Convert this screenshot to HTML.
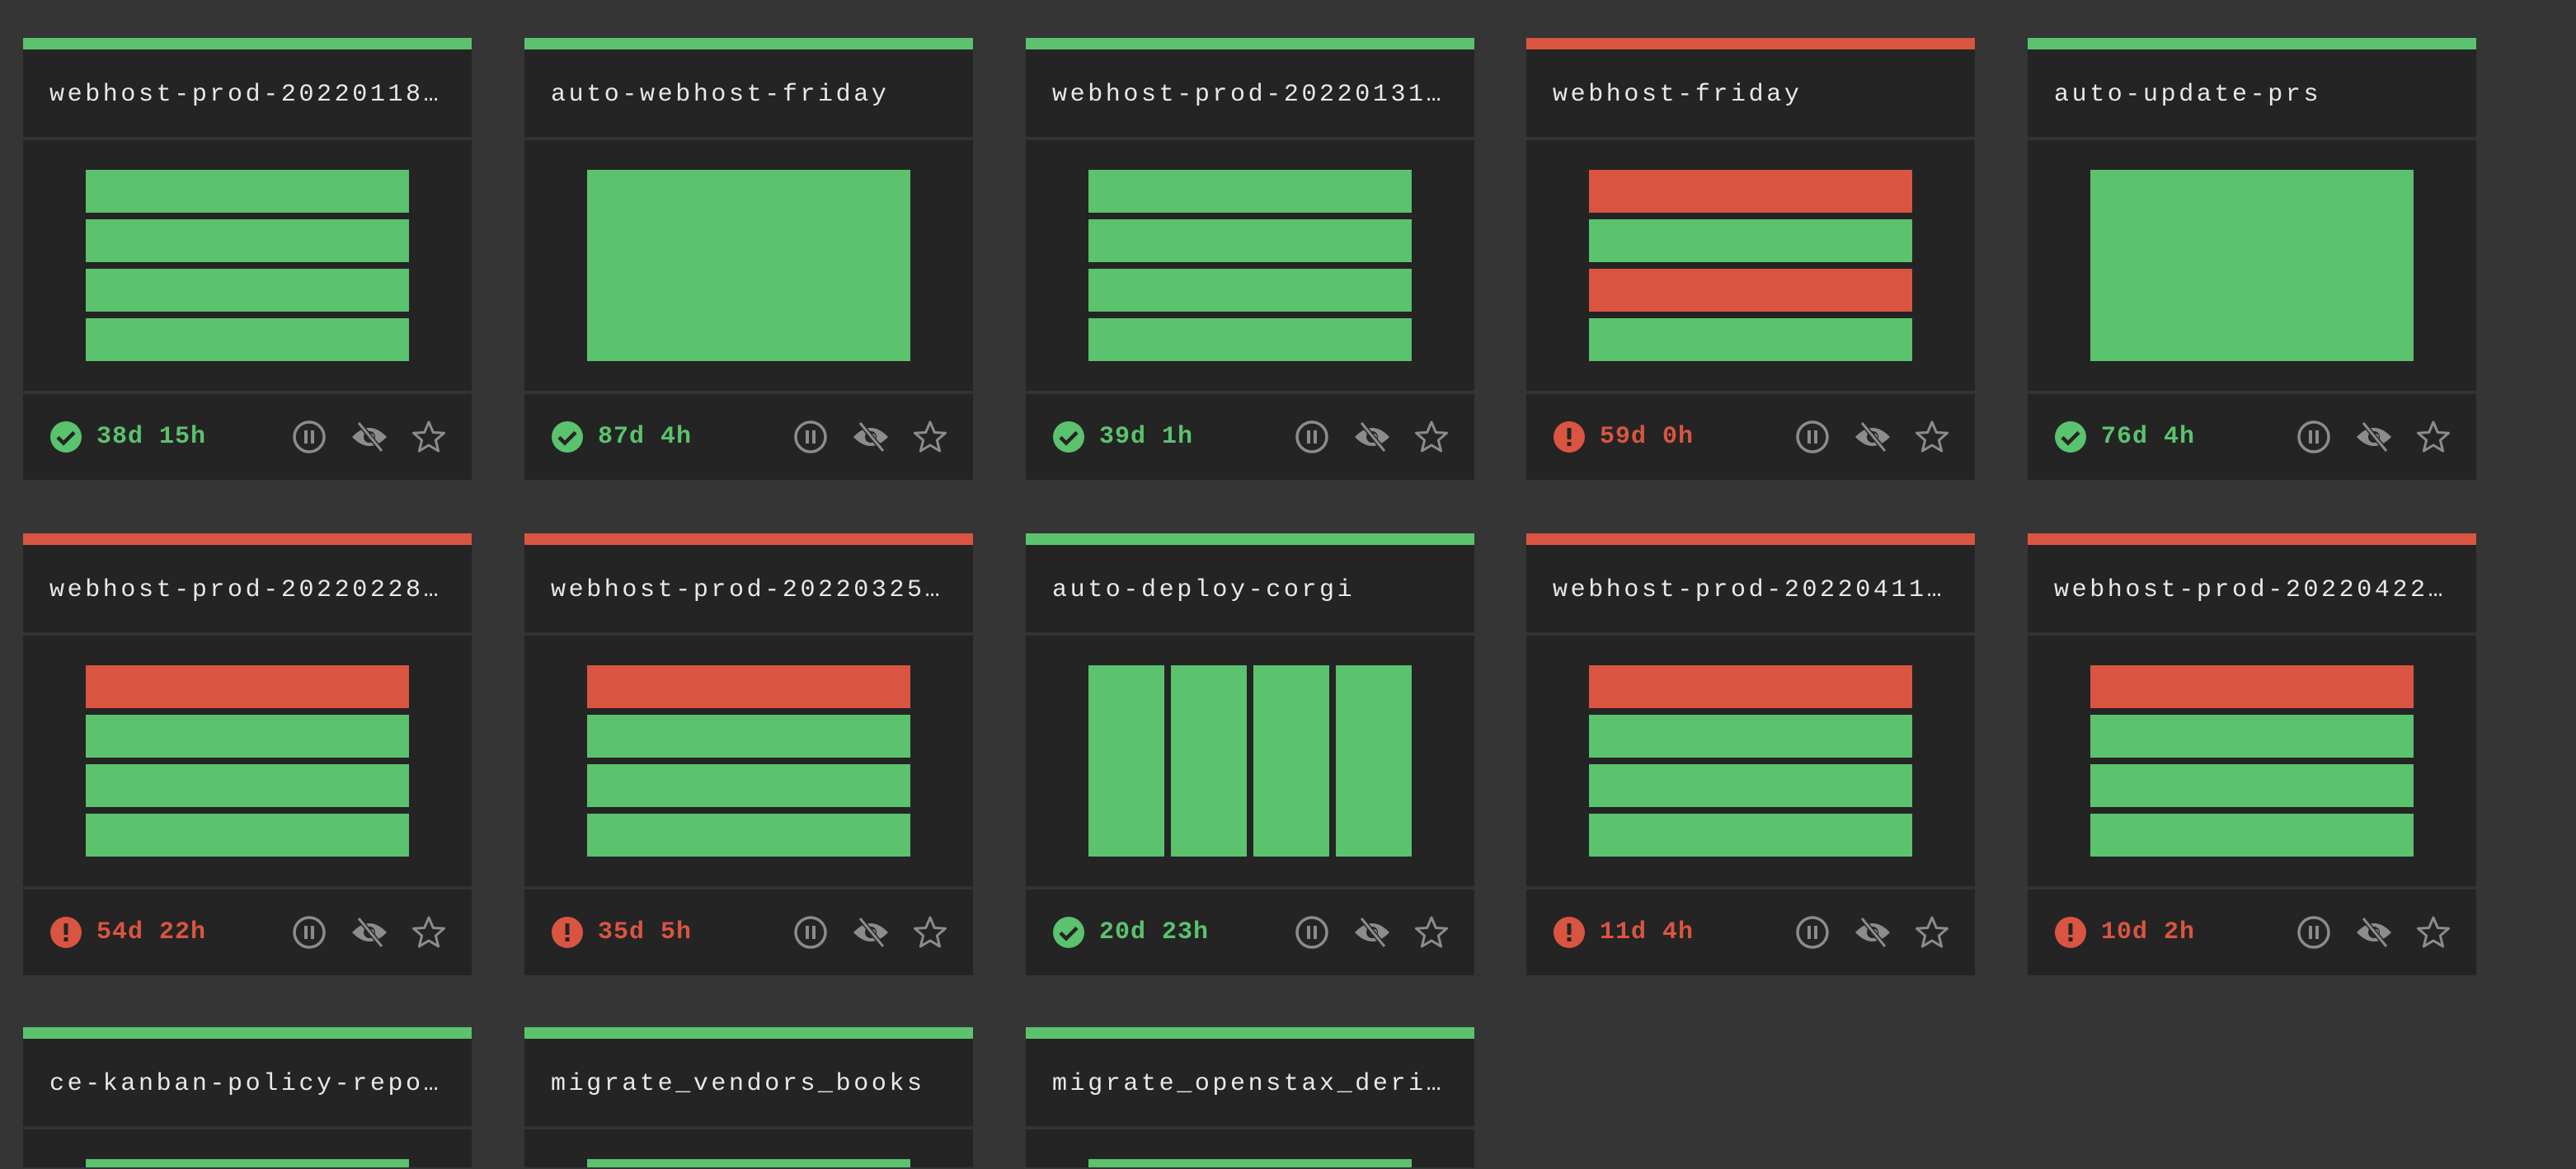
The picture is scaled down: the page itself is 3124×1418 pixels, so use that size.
<!DOCTYPE html>
<html><head><meta charset="utf-8"><style>
html,body{margin:0;padding:0;background:#353535;width:3124px;height:1418px;overflow:hidden}
.c{position:absolute;width:544px;height:536px;background:#242424;overflow:hidden}
.t{height:14px}
.g{background:#5bc26e}.r{background:#d95541}
.h{height:106px;display:flex;align-items:center;padding-left:32px;padding-top:4px;box-sizing:border-box;font-family:"Liberation Mono",monospace;font-size:30px;letter-spacing:3.6px;color:#e8e8e8;white-space:nowrap}
.b{height:304px;border-top:4px solid #333;border-bottom:4px solid #333;position:relative}
.f{height:104px;position:relative}
.rows{position:absolute;left:76px;top:36px;width:392px;height:232px}
.rows i{display:block;height:52px;margin-bottom:8px}
.cols{position:absolute;left:76px;top:36px;width:392px;height:232px;display:flex;gap:8px}
.cols i{display:block;width:92px;height:232px}
.st{position:absolute;left:33px;top:33px;display:flex;align-items:center;font-family:"Liberation Mono",monospace;font-weight:bold;font-size:30px;letter-spacing:1px}
.st svg{margin-right:18px}
.ic{position:absolute;left:310px;top:32px}
</style></head><body>
<svg width="0" height="0" style="position:absolute;top:0;left:0">
<defs>
<symbol id="ok" viewBox="0 0 38 38"><circle cx="19" cy="19" r="19" fill="#5bc26e"/><path d="M9 19.5l7 7 13-13" stroke="#242424" stroke-width="4.5" fill="none"/></symbol>
<symbol id="er" viewBox="0 0 38 38"><circle cx="19" cy="19" r="19" fill="#d95541"/><rect x="16.5" y="8" width="5" height="14" rx="1" fill="#242424"/><rect x="16.5" y="25" width="5" height="5" fill="#242424"/></symbol>
<symbol id="icons" viewBox="0 0 204 40">
<circle cx="37" cy="20" r="18" stroke="#8c8c8c" stroke-width="3.5" fill="none"/>
<rect x="31" y="12" width="4" height="16" fill="#8c8c8c"/><rect x="39" y="12" width="4" height="16" fill="#8c8c8c"/>
<path d="M89 20 Q110 -2 131 20 Q110 42 89 20Z" fill="#8c8c8c"/>
<circle cx="110" cy="20" r="7" fill="#242424"/><circle cx="112" cy="20" r="4" fill="#8c8c8c"/>
<path d="M97 3 L125 37" stroke="#242424" stroke-width="6"/><path d="M97 3 L125 37" stroke="#8c8c8c" stroke-width="3"/>
<path d="M182 2 L187.3 14.5 L200.5 15.3 L190.4 24 L193.6 37 L182 30 L170.4 37 L173.6 24 L163.5 15.3 L176.7 14.5Z" stroke="#8c8c8c" stroke-width="3" fill="none" stroke-linejoin="round"/>
</symbol>
</defs></svg>

<div class="c" style="left:28px;top:46px"><div class="t g"></div><div class="h">webhost-prod-20220118…</div><div class="b"><div class="rows"><i class="g"></i><i class="g"></i><i class="g"></i><i class="g"></i></div></div><div class="f"><div class="st" style="color:#5bc26e"><svg width="38" height="38"><use href="#ok"/></svg>38d 15h</div><svg class="ic" width="204" height="40"><use href="#icons"/></svg></div></div>
<div class="c" style="left:636px;top:46px"><div class="t g"></div><div class="h">auto-webhost-friday</div><div class="b"><div class="rows"><i class="g" style="height:232px"></i></div></div><div class="f"><div class="st" style="color:#5bc26e"><svg width="38" height="38"><use href="#ok"/></svg>87d 4h</div><svg class="ic" width="204" height="40"><use href="#icons"/></svg></div></div>
<div class="c" style="left:1244px;top:46px"><div class="t g"></div><div class="h">webhost-prod-20220131…</div><div class="b"><div class="rows"><i class="g"></i><i class="g"></i><i class="g"></i><i class="g"></i></div></div><div class="f"><div class="st" style="color:#5bc26e"><svg width="38" height="38"><use href="#ok"/></svg>39d 1h</div><svg class="ic" width="204" height="40"><use href="#icons"/></svg></div></div>
<div class="c" style="left:1851px;top:46px"><div class="t r"></div><div class="h">webhost-friday</div><div class="b"><div class="rows"><i class="r"></i><i class="g"></i><i class="r"></i><i class="g"></i></div></div><div class="f"><div class="st" style="color:#d95541"><svg width="38" height="38"><use href="#er"/></svg>59d 0h</div><svg class="ic" width="204" height="40"><use href="#icons"/></svg></div></div>
<div class="c" style="left:2459px;top:46px"><div class="t g"></div><div class="h">auto-update-prs</div><div class="b"><div class="rows"><i class="g" style="height:232px"></i></div></div><div class="f"><div class="st" style="color:#5bc26e"><svg width="38" height="38"><use href="#ok"/></svg>76d 4h</div><svg class="ic" width="204" height="40"><use href="#icons"/></svg></div></div>

<div class="c" style="left:28px;top:647px"><div class="t r"></div><div class="h">webhost-prod-20220228…</div><div class="b"><div class="rows"><i class="r"></i><i class="g"></i><i class="g"></i><i class="g"></i></div></div><div class="f"><div class="st" style="color:#d95541"><svg width="38" height="38"><use href="#er"/></svg>54d 22h</div><svg class="ic" width="204" height="40"><use href="#icons"/></svg></div></div>
<div class="c" style="left:636px;top:647px"><div class="t r"></div><div class="h">webhost-prod-20220325…</div><div class="b"><div class="rows"><i class="r"></i><i class="g"></i><i class="g"></i><i class="g"></i></div></div><div class="f"><div class="st" style="color:#d95541"><svg width="38" height="38"><use href="#er"/></svg>35d 5h</div><svg class="ic" width="204" height="40"><use href="#icons"/></svg></div></div>
<div class="c" style="left:1244px;top:647px"><div class="t g"></div><div class="h">auto-deploy-corgi</div><div class="b"><div class="cols"><i class="g"></i><i class="g"></i><i class="g"></i><i class="g"></i></div></div><div class="f"><div class="st" style="color:#5bc26e"><svg width="38" height="38"><use href="#ok"/></svg>20d 23h</div><svg class="ic" width="204" height="40"><use href="#icons"/></svg></div></div>
<div class="c" style="left:1851px;top:647px"><div class="t r"></div><div class="h">webhost-prod-20220411…</div><div class="b"><div class="rows"><i class="r"></i><i class="g"></i><i class="g"></i><i class="g"></i></div></div><div class="f"><div class="st" style="color:#d95541"><svg width="38" height="38"><use href="#er"/></svg>11d 4h</div><svg class="ic" width="204" height="40"><use href="#icons"/></svg></div></div>
<div class="c" style="left:2459px;top:647px"><div class="t r"></div><div class="h">webhost-prod-20220422…</div><div class="b"><div class="rows"><i class="r"></i><i class="g"></i><i class="g"></i><i class="g"></i></div></div><div class="f"><div class="st" style="color:#d95541"><svg width="38" height="38"><use href="#er"/></svg>10d 2h</div><svg class="ic" width="204" height="40"><use href="#icons"/></svg></div></div>

<div class="c" style="left:28px;top:1246px;height:170px"><div class="t g"></div><div class="h">ce-kanban-policy-repo…</div><div class="b"><div class="rows"><i class="g"></i></div></div></div>
<div class="c" style="left:636px;top:1246px;height:170px"><div class="t g"></div><div class="h">migrate_vendors_books</div><div class="b"><div class="rows"><i class="g"></i></div></div></div>
<div class="c" style="left:1244px;top:1246px;height:170px"><div class="t g"></div><div class="h">migrate_openstax_deri…</div><div class="b"><div class="rows"><i class="g"></i></div></div></div>
</body></html>
